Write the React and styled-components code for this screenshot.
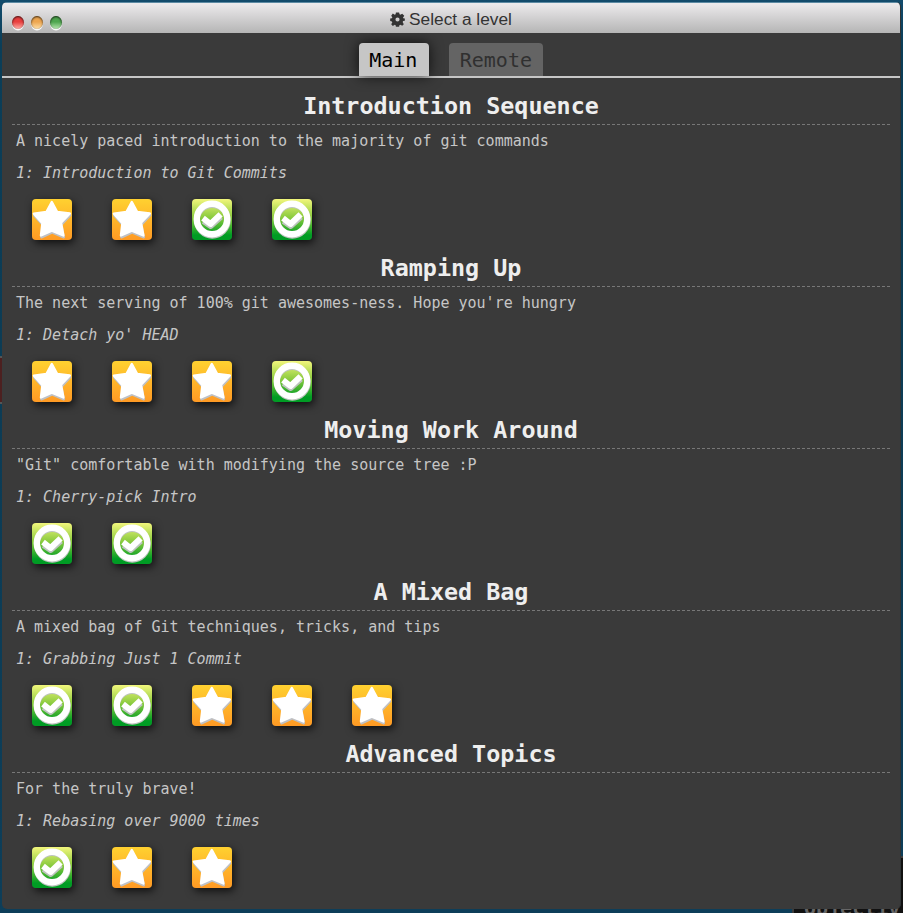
import React from "react";
import styled, { createGlobalStyle, css } from "styled-components";

const Global = createGlobalStyle`
  * { box-sizing: border-box; }
  body { margin: 0; overflow: hidden; }
`;

const mono = `"DejaVu Sans Mono", Menlo, monospace`;

const Desktop = styled.div`
  position: relative;
  width: 903px;
  height: 913px;
  padding: 2px 2px 4px;
  overflow: hidden;
  background: linear-gradient(#124b6c, #0b3e58 5%, #0c3c55 40%, #0d3e59);
`;

const Terminal = styled.div`
  position: absolute;
  left: 792px;
  top: 856px;
  width: 120px;
  height: 60px;
  padding-top: 38px;
  padding-left: 10px;
  border: 2px solid #3c3c3c;
  background: #111;
  color: #666;
  font: bold 20px/24px ${mono};
`;

const Strip = styled.div`
  position: absolute;
  left: 0;
  top: 356px;
  width: 2px;
  height: 48px;
  background: #4c2020;
  border: solid #555;
  border-width: 2px 0;
`;

const Window = styled.main`
  position: relative;
  width: 899px;
  height: 907px;
  display: flex;
  flex-direction: column;
  overflow: hidden;
  border-radius: 5px;
  background: #3a3a3a;
  border-right: 1px solid #303436;
`;

const TitleBar = styled.header`
  position: relative;
  flex: none;
  height: 31px;
  display: flex;
  align-items: center;
  justify-content: center;
  gap: 4px;
  padding-top: 2px;
  border-top: 1px solid #5c8aa3;
  background: linear-gradient(#edebed, #b5b5b5);
  color: #333;
  font: 17.3px/20px "Liberation Sans", Arial, sans-serif;
`;

const Lights = styled.div`
  position: absolute;
  left: 10px;
  top: 13px;
  display: flex;
  gap: 7px;
`;

const Light = styled.i`
  width: 12px;
  height: 13px;
  border-radius: 50%;
  background: linear-gradient(${(p) => p.$from} 45%, ${(p) => p.$to});
  box-shadow: inset 0 1px 2px rgba(0, 0, 0, 0.75), 0 1.5px 0 #f8f8f8;
`;

const Tabs = styled.nav`
  flex: none;
  height: 45px;
  display: flex;
  align-items: flex-end;
  justify-content: center;
  gap: 20px;
  border-bottom: 2px solid #c6c6c6;
`;

const Tab = styled.button`
  height: 33px;
  padding: 1px 10.8px 0;
  border: 0;
  border-radius: 4px 4px 0 0;
  background: #646464;
  color: #303030;
  font: 20px/32px ${mono};
  ${(p) => p.$active && css`
    padding: 1px 11.6px 0 10px;
    background: #c6c6c6;
    color: #000;
    box-shadow: 0 0 14px rgba(0, 0, 0, 0.75);
  `}
`;

const Levels = styled.div`
  padding: 9px 10px 0;
`;

const Sequence = styled.section`
  height: 162px;
`;

const Heading = styled.h2`
  margin: 0;
  height: 38px;
  border-bottom: 1px dashed #777;
  color: #eee;
  text-align: center;
  font: bold 23.4px/39px ${mono};
`;

const Line = styled.p`
  margin: 0;
  padding-left: 4px;
  color: #c6c6c6;
  font: ${(p) => (p.$italic ? "italic" : "normal")} 15px/32px ${mono};
`;

const Icons = styled.div`
  display: flex;
  gap: 40px;
  padding: 10px 20px 0;
`;

const Tile = styled.div`
  width: 40px;
  height: 41px;
  border-radius: 4px;
  overflow: hidden;
  background: ${(p) => (p.$done ? "linear-gradient(#f2f67c, #8acb3e 45%, #009c24 88%)" : "linear-gradient(#ffd130, #ff9a24)")};
  box-shadow: 2px 3px 9px rgba(0, 0, 0, 0.75);
  svg { display: block; }
`;

const starPath = "M19.8 3 25.2 13 37.8 14.5 29 23.8 31.4 36.5 19.8 31.6 9 36.5 10.4 24.2 1.9 14.7 14.4 13Z";

const Star = () => (
  <svg width="40" height="41" viewBox="0 0 40 41" strokeWidth="2.4" strokeLinejoin="round">
    <path d={starPath} transform="translate(.4 1.8)" fill="#bfc1c6" stroke="#bfc1c6" />
    <path d={starPath} fill="#fff" stroke="#fff" />
  </svg>
);

const Check = () => (
  <svg width="40" height="41" viewBox="0 0 40 41" fill="none">
    <circle cx="20.3" cy="21.3" r="15.4" stroke="#bec4bf" strokeWidth="6" />
    <path d="M11.4 22.2 18.7 27.2 29 18" stroke="#bec4bf" strokeWidth="5.6" strokeLinejoin="round" />
    <circle cx="20" cy="20" r="15.2" stroke="#fff" strokeWidth="6.4" />
    <path d="M11 19.2 18.5 25 28.6 15.4" stroke="#fff" strokeWidth="6" strokeLinejoin="round" />
  </svg>
);

const Gear = () => (
  <svg width="15" height="15" viewBox="-8 -8 16 16" fill="#333">
    <path fillRule="evenodd" d="M-1.7-7.5h3.4l.5 2 .8.5 2-1.2L7.2-4 5.8-2l.4.6 1.6.2v2.6l-1.8.3-.5 1L6.7 5 5 6.7 3.2 5.6l-1.2.5-.3 1.6h-3.4L-2 6l-1-.4-2 1.2L-6.7 5l1.2-2-.5-1-1.8-.5v-2.6l1.8-.2.5-.8L-6.7-4-5-6.4-3-5.2l1-.5ZM0-2.2A2.2 2.2 0 1 0 0 2.2 2.2 2.2 0 1 0 0-2.2Z" />
  </svg>
);

const sequences = [
  ["Introduction Sequence", "A nicely paced introduction to the majority of git commands", "1: Introduction to Git Commits", [0, 0, 1, 1]],
  ["Ramping Up", "The next serving of 100% git awesomes-ness. Hope you're hungry", "1: Detach yo' HEAD", [0, 0, 0, 1]],
  ["Moving Work Around", "\"Git\" comfortable with modifying the source tree :P", "1: Cherry-pick Intro", [1, 1]],
  ["A Mixed Bag", "A mixed bag of Git techniques, tricks, and tips", "1: Grabbing Just 1 Commit", [1, 1, 0, 0, 0]],
  ["Advanced Topics", "For the truly brave!", "1: Rebasing over 9000 times", [1, 0, 0]],
];

export default function App() {
  return (
    <Desktop>
      <Global />
      <Strip />
      <Terminal>Objectiv</Terminal>
      <Window>
        <TitleBar>
          <Lights>
            <Light $from="#e93f3f" $to="#ffb0a8" />
            <Light $from="#eda650" $to="#ffe0a8" />
            <Light $from="#4fa64f" $to="#b8e8b0" />
          </Lights>
          <Gear />
          <span>Select a level</span>
        </TitleBar>
        <Tabs>
          <Tab $active>Main</Tab>
          <Tab>Remote</Tab>
        </Tabs>
        <Levels>
          {sequences.map(([title, about, current, levels]) => (
            <Sequence key={title}>
              <Heading>{title}</Heading>
              <Line>{about}</Line>
              <Line $italic>{current}</Line>
              <Icons>
                {levels.map((done, i) => (
                  <Tile key={i} $done={done === 1}>{done ? <Check /> : <Star />}</Tile>
                ))}
              </Icons>
            </Sequence>
          ))}
        </Levels>
      </Window>
    </Desktop>
  );
}
